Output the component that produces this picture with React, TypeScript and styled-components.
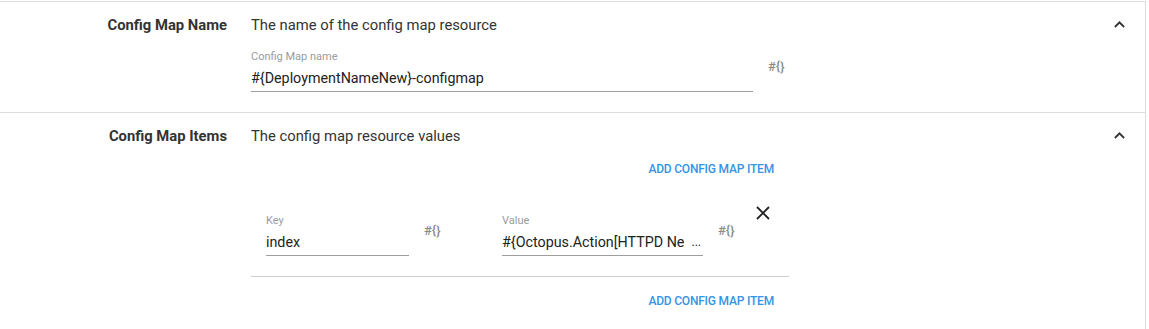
import styled, { createGlobalStyle } from "styled-components";

const GlobalStyle = createGlobalStyle`
  body {
    margin: 0;
    background: #fff;
    font-family: Roboto, "Noto Sans", Arial, sans-serif;
    color: #333;
  }
`;

const Page = styled.div`
  width: 1145px;
  margin-top: 1px;
  border-right: 1px solid #ddd;
  border-top: 1px solid #ddd;
`;

const Section = styled.section<{ $height: number }>`
  display: grid;
  grid-template-columns: 227px 538px 1fr;
  column-gap: 24px;
  height: ${(p) => p.$height}px;
  box-sizing: border-box;
  padding-top: 13px;
  border-bottom: 1px solid #ddd;
`;

const Title = styled.div`
  text-align: right;
  font-size: 14.8px;
  font-weight: 700;
  line-height: 20px;
  color: #333;
`;

const Body = styled.div`
  display: flex;
  flex-direction: column;
`;

const Description = styled.div`
  font-size: 14.8px;
  line-height: 20px;
  color: #333;
`;

const Toggle = styled.div`
  display: flex;
  justify-content: flex-end;
  padding-right: 20px;
  padding-top: 6px;
  svg {
    display: block;
  }
`;

const FieldRow = styled.div<{ $top: number }>`
  display: flex;
  align-items: center;
  margin-top: ${(p) => p.$top}px;
`;

const Field = styled.div<{ $width: number }>`
  width: ${(p) => p.$width}px;
  border-bottom: 1px solid #9e9e9e;
  padding-bottom: 3px;
`;

const FieldLabel = styled.div`
  font-size: 11px;
  line-height: 14px;
  color: #9b9b9b;
`;

const FieldValue = styled.div`
  display: flex;
  justify-content: space-between;
  font-size: 14.3px;
  line-height: 20px;
  margin-top: 4px;
  color: #222;
  white-space: nowrap;
  overflow: hidden;
`;

const Ellipsis = styled.span`
  font-size: 12px;
  padding-right: 2px;
`;

const VarButton = styled.div`
  margin-left: 15px;
  font-size: 13px;
  font-weight: 500;
  color: #8a8a8a;
  margin-top: -9px;
`;

const Actions = styled.div<{ $top: number }>`
  display: flex;
  justify-content: flex-end;
  margin-top: ${(p) => p.$top}px;
`;

const FlatButton = styled.button`
  height: 36px;
  padding: 0 15px;
  background: none;
  border: none;
  font-family: Roboto, Arial, sans-serif;
  font-size: 12px;
  font-weight: 500;
  text-transform: uppercase;
  color: #3594e4;
  letter-spacing: -0.2px;
  cursor: pointer;
`;

const ItemRow = styled.div`
  display: flex;
  align-items: flex-start;
  margin-top: 16px;
  padding: 11px 0 0 15px;
  height: 74px;
  box-sizing: border-box;
  border-bottom: 1px solid #ccc;
`;

const Pair = styled.div<{ $width?: number }>`
  display: flex;
  align-items: center;
  width: ${(p) => (p.$width ? `${p.$width}px` : "auto")};
`;

const Remove = styled.button`
  background: none;
  border: none;
  padding: 0;
  margin-left: 20px;
  margin-top: -9px;
  cursor: pointer;
  svg {
    display: block;
  }
`;

const ChevronUp = () => (
  <svg width="11" height="7" viewBox="0 0 12 8">
    <path d="M1.4 7.6 6 3l4.6 4.6L12 6 6 0 0 6z" fill="#333" />
  </svg>
);

const Close = () => (
  <svg width="16" height="16" viewBox="0 0 16 16">
    <path d="M2 2 14 14M14 2 2 14" stroke="#222" strokeWidth="1.8" />
  </svg>
);

function App() {
  return (
    <>
      <GlobalStyle />
      <Page>
        <Section $height={111}>
          <Title>Config Map Name</Title>
          <Body>
            <Description>The name of the config map resource</Description>
            <FieldRow $top={15}>
              <Field $width={502}>
                <FieldLabel>Config Map name</FieldLabel>
                <FieldValue>#{"{"}DeploymentNameNew{"}"}-configmap</FieldValue>
              </Field>
              <VarButton>#{"{}"}</VarButton>
            </FieldRow>
          </Body>
          <Toggle>
            <ChevronUp />
          </Toggle>
        </Section>
        <Section $height={217}>
          <Title>Config Map Items</Title>
          <Body>
            <Description>The config map resource values</Description>
            <Actions $top={5}>
              <FlatButton>Add Config Map Item</FlatButton>
            </Actions>
            <ItemRow>
              <Pair $width={236}>
                <Field $width={143}>
                  <FieldLabel>Key</FieldLabel>
                  <FieldValue>index</FieldValue>
                </Field>
                <VarButton>#{"{}"}</VarButton>
              </Pair>
              <Pair>
                <Field $width={201}>
                  <FieldLabel>Value</FieldLabel>
                  <FieldValue>
                    <span>#{"{"}Octopus.Action[HTTPD Ne</span>
                    <Ellipsis>...</Ellipsis>
                  </FieldValue>
                </Field>
                <VarButton>#{"{}"}</VarButton>
              </Pair>
              <Remove>
                <Close />
              </Remove>
            </ItemRow>
            <Actions $top={6}>
              <FlatButton>Add Config Map Item</FlatButton>
            </Actions>
          </Body>
          <Toggle>
            <ChevronUp />
          </Toggle>
        </Section>
      </Page>
    </>
  );
}

export default App;
